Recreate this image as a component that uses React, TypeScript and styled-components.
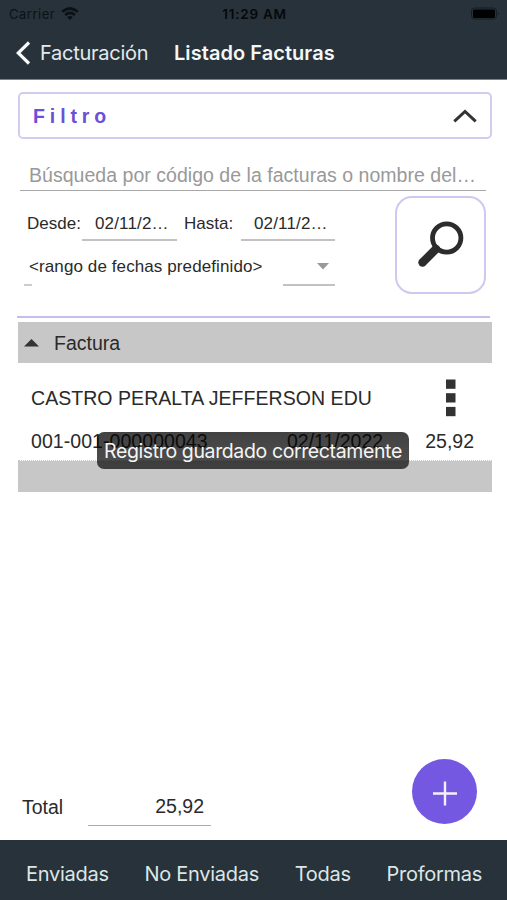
import React from "react";
import styled, { createGlobalStyle } from "styled-components";

const GlobalStyle = createGlobalStyle`
  * { box-sizing: border-box; }
  body { margin: 0; background: #fff; }
`;

const dark = "#27323a";
const helvetica = `"Liberation Sans", Arial, sans-serif`;
const system = `Inter, "Liberation Sans", sans-serif`;

const Screen = styled.div`
  position: relative;
  display: flex;
  flex-direction: column;
  width: 507px;
  height: 900px;
  overflow: hidden;
  background: #fff;
  color: #2a2a2a;
  font-family: ${helvetica};
`;

const Label = styled.span<{ $size: number; $spacing?: number; $weight?: number }>`
  font-size: ${(p) => p.$size}px;
  letter-spacing: ${(p) => p.$spacing ?? 0}px;
  font-weight: ${(p) => p.$weight ?? 400};
  line-height: 24px;
  white-space: nowrap;
`;

const Header = styled.header`
  height: 80px;
  flex: none;
  background: ${dark};
  border-bottom: 1px solid #78828a;
  font-family: ${system};
`;

const StatusBar = styled.div`
  display: grid;
  grid-template-columns: 1fr auto 1fr;
  align-items: center;
  height: 28px;
  padding: 0 7px 0 9px;
  color: #05090c;
`;

const Carrier = styled.div`
  display: flex;
  align-items: center;
  gap: 6px;
  color: #0b1216;
`;

const BatteryIcon = styled.svg`
  justify-self: end;
`;

const NavBar = styled.nav`
  display: flex;
  align-items: center;
  height: 49px;
  padding-left: 16px;
  color: #f3f7f8;
`;

const Back = styled.button`
  display: flex;
  align-items: center;
  gap: 9px;
  width: 158px;
  padding: 0;
  border: 0;
  background: none;
  color: #e3eaec;
  font-family: inherit;
`;

const FilterToggle = styled.button`
  display: flex;
  align-items: center;
  justify-content: space-between;
  flex: none;
  height: 47px;
  margin: 12px 15px 0 18px;
  padding: 0 13px 0 13px;
  border: 2px solid #d3ccf1;
  border-radius: 5px;
  background: #fff;
  color: #6b50d8;
  font-family: inherit;
`;

const SearchField = styled.div`
  display: flex;
  align-items: center;
  flex: none;
  height: 39px;
  margin: 13px 21px 0 20px;
  padding: 8px 0 0 9px;
  border-bottom: 1px solid #a8a8a8;
  color: #999;
`;

const FilterBody = styled.section`
  display: flex;
  justify-content: space-between;
  flex: none;
  height: 127px;
  margin: 0 17px;
  padding: 5px 4px 0 7px;
  border-bottom: 2px solid #c5bdea;
`;

const FilterFields = styled.div`
  width: 311px;
`;

const DateRow = styled.div`
  display: flex;
  height: 45px;
  padding-left: 3px;
`;

const DateLabel = styled.div<{ $width: number }>`
  width: ${(p) => p.$width}px;
  padding-top: 16px;
`;

const DateField = styled.div<{ $width: number; $gap: number }>`
  width: ${(p) => p.$width}px;
  margin-right: ${(p) => p.$gap}px;
  padding: 16px 0 0 13px;
  border-bottom: 2px solid #c2c2c2;
`;

const RangeRow = styled.div`
  display: flex;
  justify-content: space-between;
  height: 45px;
`;

const RangeLabel = styled.div`
  display: flex;
  flex-direction: column;
  justify-content: space-between;
  padding-top: 14px;

  & > span { padding-left: 5px; }
  &::after {
    content: "";
    width: 8px;
    height: 2px;
    background: #ccc;
  }
`;

const RangeSelect = styled.div`
  display: flex;
  justify-content: flex-end;
  width: 52px;
  padding: 22px 6px 0 0;
  border-bottom: 2px solid #c2c2c2;
`;

const SearchButton = styled.button`
  width: 91px;
  height: 98px;
  padding: 0;
  border: 2px solid #cfc8f0;
  border-radius: 17px;
  background: #fff;
`;

const TableHead = styled.div`
  display: flex;
  align-items: center;
  gap: 15px;
  flex: none;
  height: 41px;
  margin: 4px 15px 0 18px;
  padding: 0 0 0 6px;
  background: #c7c7c7;
`;

const Invoice = styled.article`
  flex: none;
  height: 98px;
  margin: 0 15px 0 18px;
  padding: 16px 18px 0 13px;
  border-bottom: 1px dotted #c7c7c7;
`;

const InvoiceTop = styled.div`
  display: flex;
  justify-content: space-between;
  height: 39px;
  padding: 0 18px 0 0;

  & > span { padding-top: 7px; }
`;

const InvoiceBottom = styled.div`
  display: grid;
  grid-template-columns: 256px 1fr auto;
  padding-top: 11px;
`;

const TableFoot = styled.div`
  flex: none;
  height: 31px;
  margin: 0 15px 0 18px;
  background: #c7c7c7;
`;

const Toast = styled.div`
  position: absolute;
  left: 97px;
  top: 432px;
  display: flex;
  align-items: center;
  justify-content: center;
  width: 312px;
  height: 37px;
  border-radius: 7px;
  background: linear-gradient(rgba(0, 0, 0, 0.74), rgba(0, 0, 0, 0.7) 28px, rgba(24, 24, 24, 0.78) 32px);
  color: #f5f5f5;
  font-family: ${system};
`;

const Summary = styled.div`
  display: flex;
  flex: 1;
  align-items: flex-end;
  justify-content: space-between;
  padding: 0 30px 14px 22px;
`;

const Total = styled.div`
  display: flex;
  align-items: flex-end;
`;

const TotalLabel = styled.div`
  width: 66px;
  padding-bottom: 7px;
`;

const TotalValue = styled.div`
  display: flex;
  justify-content: flex-end;
  width: 123px;
  height: 33px;
  padding: 1px 7px 0 0;
  border-bottom: 1px solid #aaa;
`;

const AddButton = styled.button`
  width: 65px;
  height: 65px;
  margin-bottom: 2px;
  padding: 0;
  border: 0;
  border-radius: 50%;
  background: #7558e2;
`;

const TabBar = styled.nav`
  display: flex;
  justify-content: space-between;
  flex: none;
  height: 60px;
  padding: 22px 25px 0 26px;
  background: ${dark};
  color: #dce6e7;
  font-family: ${system};
`;

const tabs = ["Enviadas", "No Enviadas", "Todas", "Proformas"];

export default function App() {
  return (
    <>
      <GlobalStyle />
      <Screen>
        <Header>
          <StatusBar>
            <Carrier>
              <Label $size={13} $spacing={0.5}>Carrier</Label>
              <svg width="18" height="14" viewBox="0 0 18 14" fill="none" stroke="currentColor">
                <path d="M1.2 4.8Q9-1.8 16.8 4.8" strokeWidth="2.7" />
                <path d="M4.1 8Q9 3.8 13.9 8" strokeWidth="2.6" />
                <path d="M6.2 10.1Q9 7.8 11.8 10.1L9 13Z" fill="currentColor" stroke="none" />
              </svg>
            </Carrier>
            <Label $size={13.5} $spacing={0.75} $weight={600}>11:29 AM</Label>
            <BatteryIcon width="30" height="14" viewBox="0 0 30 14">
              <rect x="1.5" y="1" width="25" height="11" rx="3" fill="none" stroke="#141d22" />
              <rect x="3" y="2.5" width="22" height="8.5" rx="1.5" fill="#000" />
              <path d="M28 5Q30 6.5 28 8Z" fill="#141d22" />
            </BatteryIcon>
          </StatusBar>
          <NavBar>
            <Back>
              <svg width="15" height="24" viewBox="0 0 15 24" fill="none" stroke="#f7fafa" strokeWidth="3.2">
                <path d="M13 1.5L2.2 12L13 22.5" />
              </svg>
              <Label $size={20} $spacing={-0.25}>Facturación</Label>
            </Back>
            <Label $size={20} $spacing={0.05} $weight={600}>Listado Facturas</Label>
          </NavBar>
        </Header>

        <FilterToggle>
          <Label $size={19.5} $spacing={4.9} $weight={700}>Filtro</Label>
          <svg width="24" height="14" viewBox="0 0 24 14" fill="none" stroke="#333" strokeWidth="3">
            <path d="M1.3 12.3L12 2.5L22.7 12.3" />
          </svg>
        </FilterToggle>

        <SearchField>
          <Label $size={19.5} $spacing={0.03}>Búsqueda por código de la facturas o nombre del…</Label>
        </SearchField>

        <FilterBody>
          <FilterFields>
            <DateRow>
              <DateLabel $width={55}><Label $size={17}>Desde:</Label></DateLabel>
              <DateField $width={95} $gap={7}><Label $size={17} $spacing={0.15}>02/11/2…</Label></DateField>
              <DateLabel $width={57}><Label $size={17}>Hasta:</Label></DateLabel>
              <DateField $width={94} $gap={0}><Label $size={17} $spacing={0.15}>02/11/2…</Label></DateField>
            </DateRow>
            <RangeRow>
              <RangeLabel><Label $size={17} $spacing={0.1}>&lt;rango de fechas predefinido&gt;</Label></RangeLabel>
              <RangeSelect>
                <svg width="12" height="7" viewBox="0 0 12 7"><path d="M0 0H12L6 6.5Z" fill="#999" /></svg>
              </RangeSelect>
            </RangeRow>
          </FilterFields>
          <SearchButton>
            <svg width="46" height="46" viewBox="0 0 46 46" fill="none" stroke="#2c2c2c">
              <circle cx="28.7" cy="17" r="14.2" strokeWidth="4.8" />
              <path d="M18 28L4.5 41.5" strokeWidth="8.4" strokeLinecap="round" />
            </svg>
          </SearchButton>
        </FilterBody>

        <TableHead>
          <svg width="15" height="9" viewBox="0 0 15 9"><path d="M0 8.5L7.5 1L15 8.5Z" fill="#333" /></svg>
          <Label $size={19.5}>Factura</Label>
        </TableHead>
        <Invoice>
          <InvoiceTop>
            <Label $size={19.5} $spacing={0.05}>CASTRO PERALTA JEFFERSON EDU</Label>
            <svg width="11" height="38" viewBox="0 0 11 38" fill="#333">
              <rect x="1" y="0.5" width="9.5" height="9.3" />
              <rect x="1" y="14.2" width="9.5" height="9.3" />
              <rect x="1" y="27.9" width="9.5" height="9.3" />
            </svg>
          </InvoiceTop>
          <InvoiceBottom>
            <Label $size={19.5} $spacing={0.06}>001-001-000000043</Label>
            <Label $size={19.5}>02/11/2022</Label>
            <Label $size={19.5}>25,92</Label>
          </InvoiceBottom>
        </Invoice>
        <TableFoot />

        <Summary>
          <Total>
            <TotalLabel><Label $size={19.5}>Total</Label></TotalLabel>
            <TotalValue><Label $size={19.5}>25,92</Label></TotalValue>
          </Total>
          <AddButton>
            <svg width="65" height="65" viewBox="0 0 65 65" stroke="#f5f0ff" strokeWidth="2.4">
              <path d="M21 34.5H45M33 22.5V46.5" />
            </svg>
          </AddButton>
        </Summary>

        <TabBar>
          {tabs.map((name) => (
            <Label key={name} $size={20} $spacing={-0.28}>{name}</Label>
          ))}
        </TabBar>

        <Toast>
          <Label $size={19.5} $spacing={-0.38}>Registro guardado correctamente</Label>
        </Toast>
      </Screen>
    </>
  );
}
